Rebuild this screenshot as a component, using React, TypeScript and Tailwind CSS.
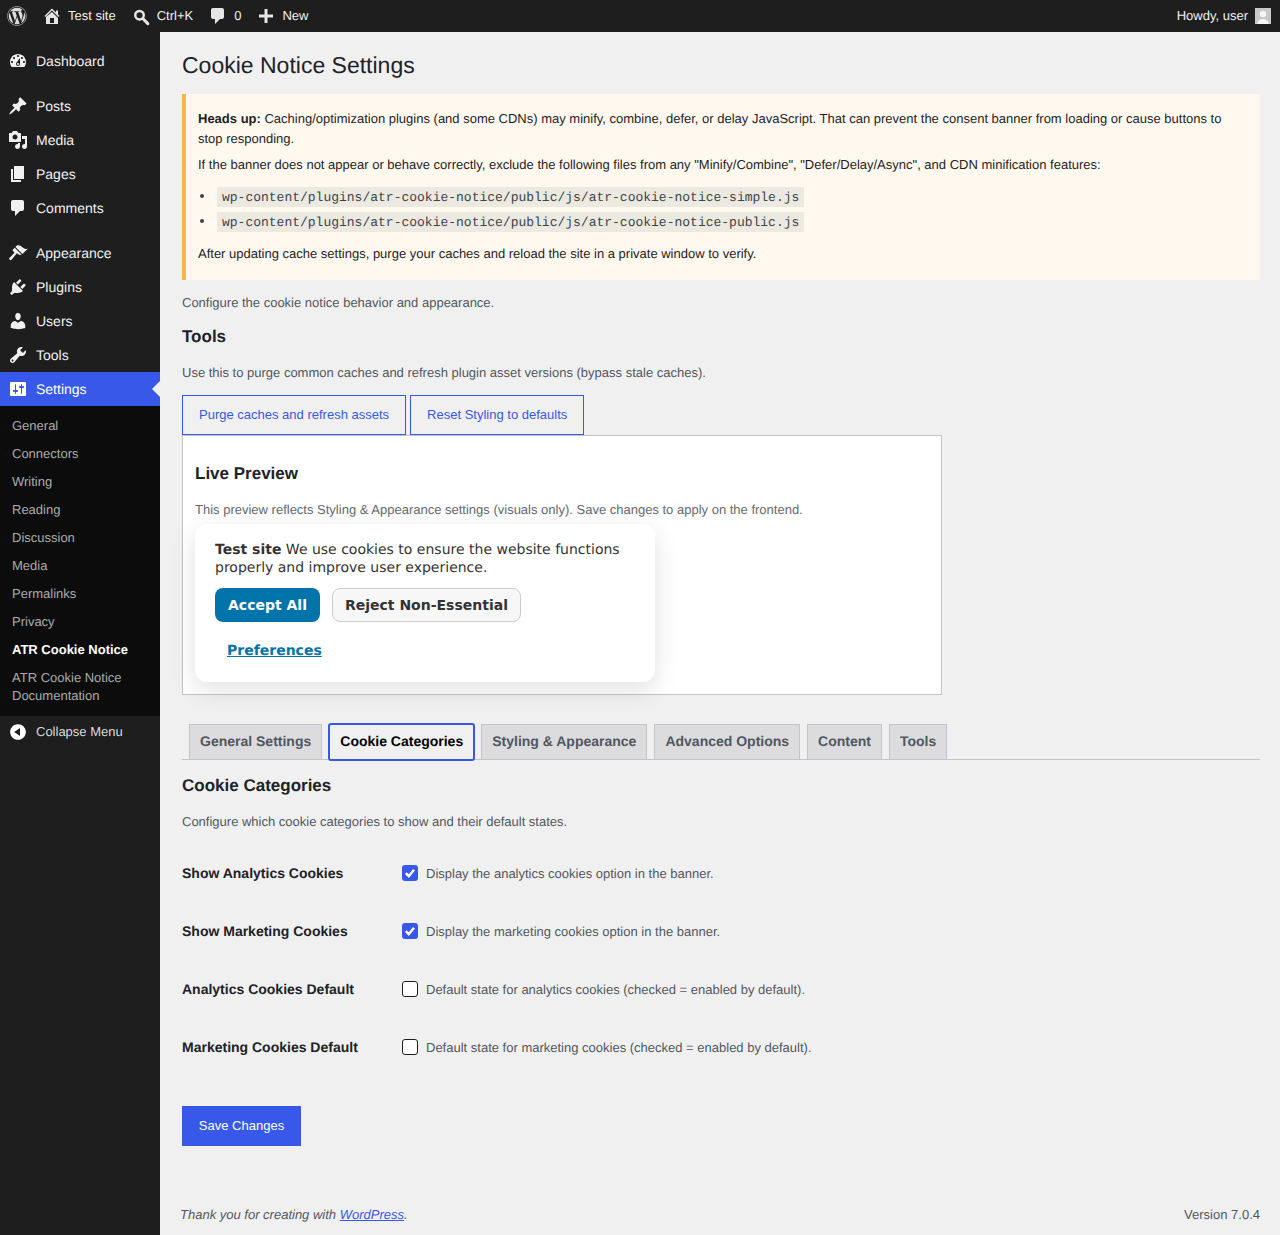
import { FaWordpress } from "react-icons/fa";

const ICONS: Record<string, string> = {
  dashboard:
    "M3.76 16h12.48c1.1-1.37 1.76-3.11 1.76-5 0-4.42-3.58-8-8-8s-8 3.58-8 8c0 1.89.66 3.63 1.76 5zM10 4c.55 0 1 .45 1 1s-.45 1-1 1-1-.45-1-1 .45-1 1-1zM6 6c.55 0 1 .45 1 1s-.45 1-1 1-1-.45-1-1 .45-1 1-1zm8 0c.55 0 1 .45 1 1s-.45 1-1 1-1-.45-1-1 .45-1 1-1zm-5.37 5.55L12 7v6c0 1.1-.9 2-2 2s-2-.9-2-2c0-.57.24-1.08.63-1.45zM4 10c.55 0 1 .45 1 1s-.45 1-1 1-1-.45-1-1 .45-1 1-1zm12 0c.55 0 1 .45 1 1s-.45 1-1 1-1-.45-1-1 .45-1 1-1zm-5 3c0-.55-.45-1-1-1s-1 .45-1 1 .45 1 1 1 1-.45 1-1z",
  posts:
    "M10.44 3.02l1.82-1.82 6.36 6.35-1.83 1.82c-1.05-.68-2.48-.57-3.41.36l-.75.75c-.92.93-1.04 2.35-.35 3.41l-1.83 1.82-2.41-2.41-2.8 2.79c-.42.42-3.38 2.71-3.8 2.29s1.86-3.39 2.28-3.81l2.79-2.79L4.1 9.36l1.83-1.82c1.05.69 2.48.57 3.4-.36l.75-.75c.93-.92 1.05-2.35.36-3.41z",
  media:
    "M13 11V4c0-.55-.45-1-1-1h-1.67L9 1H5L3.67 3H2c-.55 0-1 .45-1 1v7c0 .55.45 1 1 1h10c.55 0 1-.45 1-1zM7 4.5c1.38 0 2.5 1.12 2.5 2.5S8.38 9.5 7 9.5 4.5 8.38 4.5 7 5.62 4.5 7 4.5zM14 6h5v10.5c0 1.38-1.12 2.5-2.5 2.5S14 17.88 14 16.5s1.12-2.5 2.5-2.5c.17 0 .34.02.5.05V9h-3V6zm-4 8.05V13h2v3.5c0 1.38-1.12 2.5-2.5 2.5S7 17.88 7 16.5 8.12 14 9.5 14c.17 0 .34.02.5.05z",
  pages: "M6 15V2h10v13H6zm-1 1h8v2H3V5h2v11z",
  comments:
    "M5 2h9c1.1 0 2 .9 2 2v7c0 1.1-.9 2-2 2h-2l-5 5v-5H5c-1.1 0-2-.9-2-2V4c0-1.1.9-2 2-2z",
  appearance:
    "M14.48 11.06L7.41 3.99l1.5-1.5c.5-.56 2.3-.47 3.51.32 1.21.8 1.43 1.28 2.91 2.1 1.18.64 2.45 1.26 4.45.85zM13.77 11.77L6.7 4.7 4.93 6.47c-.39.39-.39 1.02 0 1.41l1.06 1.06c.39.39.39 1.03 0 1.42L1.6 14.8c-.6.6-.6 1.4 0 2s1.4.6 2 0l4.87-6.090c.39-.39 1.03-.39 1.42 0l1.06 1.06c.39.39 1.02.39 1.41 0z",
  plugins:
    "M13.11 4.36L9.87 7.6 8 5.73l3.24-3.24c.35-.34 1.05-.2 1.56.32.52.51.66 1.21.31 1.55zm-8 1.77l.91-1.12 9.01 9.01-1.19.84c-.71.71-2.63 1.16-3.82 1.16H6.14L4.9 17.26c-.59.59-1.54.59-2.12 0-.59-.58-.59-1.53 0-2.12l1.24-1.24v-3.88c0-1.13.4-3.19 1.09-3.89zm7.26 3.97l3.24-3.24c.34-.35 1.04-.21 1.55.31.52.51.66 1.21.31 1.55l-3.24 3.25z",
  users:
    "M10 9.25c-2.27 0-2.73-3.44-2.73-3.44C7 4.02 7.82 2 9.97 2c2.16 0 2.98 2.02 2.71 3.81 0 0-.41 3.44-2.68 3.44zm0 2.57L12.72 10c2.39 0 4.52 2.33 4.52 4.53v2.49s-3.65 1.13-7.24 1.13c-3.65 0-7.24-1.13-7.24-1.13v-2.49c0-2.25 1.94-4.48 4.47-4.48z",
  tools:
    "M16.68 9.77c-1.34 1.34-3.3 1.67-4.95.99l-5.41 6.52c-.99.99-2.59.99-3.58 0s-.99-2.59 0-3.57l6.52-5.42c-.68-1.65-.35-3.61.99-4.95 1.28-1.28 3.12-1.62 4.72-1.06l-2.89 2.89 2.82 2.82 2.86-2.87c.53 1.58.18 3.39-1.08 4.65zM3.81 16.21c.4.39 1.04.39 1.43 0 .4-.4.4-1.04 0-1.43-.39-.4-1.03-.4-1.43 0-.39.39-.39 1.03 0 1.43z",
  settings:
    "M18 16V4c0-.55-.45-1-1-1H3c-.55 0-1 .45-1 1v12c0 .55.45 1 1 1h14c.55 0 1-.45 1-1zM8 11h1c.55 0 1 .45 1 1s-.45 1-1 1H8v1.5c0 .28-.22.5-.5.5s-.5-.22-.5-.5V13H6c-.55 0-1-.45-1-1s.45-1 1-1h1V5.5c0-.28.22-.5.5-.5s.5.22.5.5V11zm5-2h-1c-.55 0-1-.45-1-1s.45-1 1-1h1V5.5c0-.28.22-.5.5-.5s.5.22.5.5V7h1c.55 0 1 .45 1 1s-.45 1-1 1h-1v5.5c0 .28-.22.5-.5.5s-.5-.22-.5-.5V9z",
  home: "M16 8.5l1.53 1.53-1.06 1.06L10 4.62l-6.47 6.47-1.06-1.06L10 2.5l4 4v-2h2v4zm-6-2.46l6 5.99V18H4v-6.97zM12 17v-5H8v5h4z",
  plus: "M8.5 3h3v5.500H17v3h-5.500V17h-3v-5.500H3v-3h5.500z",
  collapse:
    "M10 2.160c4.330 0 7.840 3.510 7.840 7.840S14.330 17.840 10 17.840 2.160 14.330 2.160 10 5.670 2.160 10 2.160zm2 11.720V6.120L6.180 9.970z",
};

function Icon({ name, size = 20, className }: { name: string; size?: number; className?: string }) {
  return (
    <svg viewBox="0 0 20 20" width={size} height={size} fill="currentColor" className={className}>
      <path d={ICONS[name]} fillRule="evenodd" />
    </svg>
  );
}

function SearchIcon({ className }: { className?: string }) {
  return (
    <svg viewBox="0 0 20 20" width={20} height={20} fill="none" stroke="currentColor" className={className}>
      <circle cx="7.500" cy="9.200" r="4.250" strokeWidth="2.500" />
      <path d="M11 12.800l4.800 4.800" strokeWidth="3" strokeLinecap="round" />
    </svg>
  );
}

function MenuItem({ icon, label, active }: { icon: string; label: string; active?: boolean }) {
  return (
    <div
      className={`relative flex h-[34px] items-center text-[14px] ${
        active ? "bg-[#3858e9] text-white" : "text-[#f0f0f1]"
      }`}
    >
      <Icon name={icon} className={`ml-[8px] mr-[8px] ${active ? "text-white" : "text-[#f0f0f1]"}`} />
      <span>{label}</span>
      {active && (
        <span className="absolute right-0 top-[9px] border-y-[8px] border-r-[8px] border-y-transparent border-r-[#f0f0f1]" />
      )}
    </div>
  );
}

const SUBMENU = ["General", "Connectors", "Writing", "Reading", "Discussion", "Media", "Permalinks", "Privacy"];

function Sidebar() {
  return (
    <aside className="w-[160px] shrink-0 bg-[#1e1e1e] pt-[12px]">
      <MenuItem icon="dashboard" label="Dashboard" />
      <div className="h-[11px]" />
      <MenuItem icon="posts" label="Posts" />
      <MenuItem icon="media" label="Media" />
      <MenuItem icon="pages" label="Pages" />
      <MenuItem icon="comments" label="Comments" />
      <div className="h-[11px]" />
      <MenuItem icon="appearance" label="Appearance" />
      <MenuItem icon="plugins" label="Plugins" />
      <MenuItem icon="users" label="Users" />
      <MenuItem icon="tools" label="Tools" />
      <MenuItem icon="settings" label="Settings" active />
      <div className="h-[310px] bg-[#0c0c0c] pt-[6px] text-[13px] text-[#f0f0f1]/70">
        {SUBMENU.map((s) => (
          <div key={s} className="flex h-[28px] items-center pl-[12px]">
            {s}
          </div>
        ))}
        <div className="flex h-[28px] items-center pl-[12px] font-bold text-white">ATR Cookie Notice</div>
        <div className="pl-[12px] pt-[5px] leading-[18px]">
          ATR Cookie Notice
          <br />
          Documentation
        </div>
      </div>
      <div className="flex h-[32px] items-center text-[13px] text-[#f0f0f1]/90">
        <Icon name="collapse" className="ml-[8px] mr-[8px] text-white" />
        Collapse Menu
      </div>
    </aside>
  );
}

function AdminBar() {
  return (
    <header className="flex h-[32px] items-center bg-[#1e1e1e] text-[13px] text-[#f0f0f1]">
      <FaWordpress className="ml-[7px] text-[20px] text-[#dcdcdc]" />
      <Icon name="home" className="ml-[15px] mr-[6px] text-[#e6e6e6]" />
      <span>Test site</span>
      <SearchIcon className="ml-[16px] mr-[5px] text-[#e6e6e6]" />
      <span>Ctrl+K</span>
      <Icon name="comments" className="ml-[15px] mr-[6px] text-[#e6e6e6]" />
      <span>0</span>
      <Icon name="plus" className="ml-[15px] mr-[6px] text-[#e6e6e6]" />
      <span>New</span>
      <span className="ml-auto">Howdy, user</span>
      <span className="ml-[7px] mr-[9px] flex h-[16px] w-[16px] items-end justify-center overflow-hidden bg-[#c8c8c8]">
        <svg viewBox="0 0 16 16" width={16} height={16} fill="#f5f5f5">
          <circle cx="8" cy="6" r="3.200" />
          <path d="M2.500 16c0-3.500 2.500-5 5.500-5s5.500 1.500 5.500 5z" />
        </svg>
      </span>
    </header>
  );
}

function Notice() {
  const files = [
    "wp-content/plugins/atr-cookie-notice/public/js/atr-cookie-notice-simple.js",
    "wp-content/plugins/atr-cookie-notice/public/js/atr-cookie-notice-public.js",
  ];
  return (
    <div className="mt-[14px] h-[186px] border-l-[4px] border-[#f0b849] bg-[#fff8ef] pl-[12px] pr-[12px] pt-[15px] text-[13px] leading-[20px] text-[#1e1e1e]">
      <p className="mr-[12px]">
        <strong>Heads up:</strong> Caching/optimization plugins (and some CDNs) may minify, combine, defer, or delay
        JavaScript. That can prevent the consent banner from loading or cause buttons to stop responding.
      </p>
      <p className="mt-[6px]">
        If the banner does not appear or behave correctly, exclude the following files from any "Minify/Combine",
        "Defer/Delay/Async", and CDN minification features:
      </p>
      <ul className="mt-[11px] list-disc pl-[17px] marker:text-[#3c434a]">
        {files.map((f) => (
          <li key={f} className="h-[25px]">
            <code className="ml-[2px] bg-[#ece9e0] px-[5px] py-[2.500px] font-['Liberation_Mono',monospace] text-[13px] text-[#3c434a]">
              {f}
            </code>
          </li>
        ))}
      </ul>
      <p className="mt-[8px]">After updating cache settings, purge your caches and reload the site in a private window to verify.</p>
    </div>
  );
}

function OutlineButton({ label }: { label: string }) {
  return (
    <button className="h-[40px] border border-[#3858e9] px-[16px] text-[13px] text-[#3858e9]">{label}</button>
  );
}

function Preview() {
  return (
    <div className="h-[260px] w-[760px] border border-[#c3c4c7] bg-white px-[12px] pt-[22px]">
      <h2 className="text-[17px] font-bold leading-[32px] text-[#1d2327]">Live Preview</h2>
      <p className="mt-[10px] text-[13px] leading-[20px] text-[#646970]">
        This preview reflects Styling &amp; Appearance settings (visuals only). Save changes to apply on the frontend.
      </p>
      <div className="relative mt-[4px] h-[158px] w-[460px] rounded-[12px] bg-white px-[20px] pt-[16px] font-['DejaVu_Sans',sans-serif] text-[14px] leading-[18px] text-[#333] shadow-[0_8px_24px_rgba(0,0,0,0.12)]">
        <p className="pt-[1px]">
          <strong>Test site</strong> We use cookies to ensure the website functions properly and improve user
          experience.
        </p>
        <div className="mt-[11px] flex gap-[12px]">
          <button className="h-[34px] rounded-[8px] bg-[#0073aa] px-[13px] font-bold text-white">Accept All</button>
          <button className="h-[34px] rounded-[8px] border border-[#ccc] bg-[#f7f7f7] px-[12px] font-bold text-[#333]">
            Reject Non-Essential
          </button>
        </div>
        <a className="mt-[20px] ml-[12px] block font-bold text-[#0073aa] underline">Preferences</a>
      </div>
    </div>
  );
}

const TABS = ["General Settings", "Cookie Categories", "Styling & Appearance", "Advanced Options", "Content", "Tools"];

function Tabs() {
  return (
    <div className="mt-[29px] flex h-[36px] gap-[7px] border-b border-[#c3c4c7] pl-[7px] text-[14px] font-bold">
      {TABS.map((t) =>
        t === "Cookie Categories" ? (
          <div
            key={t}
            className="z-10 -mx-[1px] -mt-[1px] flex h-[38px] items-center rounded-[3px] border-[2px] border-[#3858e9] bg-[#f0f0f1] px-[10px] pb-[2px] text-black"
          >
            {t}
          </div>
        ) : (
          <div key={t} className="flex h-[36px] items-center border border-[#c3c4c7] bg-[#dcdcde] px-[10px] pb-[2px] text-[#50575e]">
            {t}
          </div>
        ),
      )}
    </div>
  );
}

function Row({ label, text, checked }: { label: string; text: string; checked?: boolean }) {
  return (
    <div className="flex h-[58px] items-center">
      <div className="w-[220px] text-[14px] font-bold text-[#1d2327]">{label}</div>
      {checked ? (
        <span className="flex h-[16px] w-[16px] items-center justify-center rounded-[3px] bg-[#3858e9]">
          <svg viewBox="0 0 16 16" width={16} height={16} fill="none" stroke="white" strokeWidth="2.500">
            <path d="M3.800 8.200l3 3 5.200-6.400" />
          </svg>
        </span>
      ) : (
        <span className="h-[16px] w-[16px] rounded-[3px] border border-[#1e1e1e] bg-white" />
      )}
      <span className="ml-[8px] mt-[2px] text-[13px] text-[#50575e]">{text}</span>
    </div>
  );
}

export default function App() {
  return (
    <div className="flex min-h-[1235px] flex-col bg-[#f0f0f1] font-['Liberation_Sans',Arial,sans-serif] [text-rendering:geometricPrecision]">
      <AdminBar />
      <div className="flex flex-1">
        <Sidebar />
        <main className="flex min-w-0 flex-1 flex-col pl-[22px] pr-[20px] text-[13px] text-[#50575e]">
          <h1 className="mt-[18px] text-[23px] leading-[30px] text-[#1d2327]">Cookie Notice Settings</h1>
          <Notice />
          <p className="mt-[13px] leading-[20px]">Configure the cookie notice behavior and appearance.</p>
          <h2 className="mt-[12px] text-[17px] font-bold leading-[24px] text-[#1d2327]">Tools</h2>
          <p className="mt-[14px] leading-[20px]">
            Use this to purge common caches and refresh plugin asset versions (bypass stale caches).
          </p>
          <div className="mt-[12px] flex gap-[4px]">
            <OutlineButton label="Purge caches and refresh assets" />
            <OutlineButton label="Reset Styling to defaults" />
          </div>
          <Preview />
          <Tabs />
          <h2 className="mt-[13px] text-[17px] font-bold leading-[26px] text-[#1d2327]">Cookie Categories</h2>
          <p className="mt-[13px] leading-[20px]">Configure which cookie categories to show and their default states.</p>
          <div className="mt-[12px]">
            <Row label="Show Analytics Cookies" text="Display the analytics cookies option in the banner." checked />
            <Row label="Show Marketing Cookies" text="Display the marketing cookies option in the banner." checked />
            <Row label="Analytics Cookies Default" text="Default state for analytics cookies (checked = enabled by default)." />
            <Row label="Marketing Cookies Default" text="Default state for marketing cookies (checked = enabled by default)." />
          </div>
          <button className="mt-[30px] h-[40px] w-[119px] bg-[#3858e9] text-[13px] text-white">Save Changes</button>
          <footer className="mt-auto -ml-[2px] flex h-[30px] items-start justify-between text-[#50575e]">
            <span className="italic">
              Thank you for creating with <a className="text-[#3858e9] underline">WordPress</a>.
            </span>
            <span>Version 7.0.4</span>
          </footer>
        </main>
      </div>
    </div>
  );
}
